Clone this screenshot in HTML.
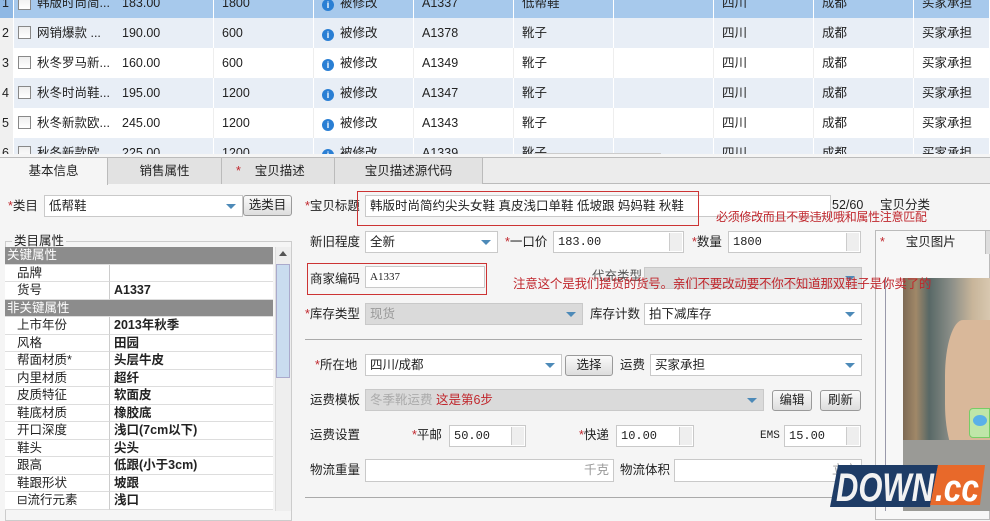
<!DOCTYPE html>
<html><head><meta charset="utf-8"><style>
*{box-sizing:border-box;margin:0;padding:0}
body{width:990px;height:511px;overflow:hidden;background:#f5f5f5;font-family:"Liberation Sans","Noto Sans CJK SC",sans-serif;font-size:12.5px;line-height:16px;color:#222;position:relative}
.a{position:absolute;white-space:nowrap}
.row{position:absolute;left:0;width:990px;height:30px}
.row div{position:absolute;top:0;height:30px;line-height:30px;border-right:1px solid #fff;padding-left:8px}
.cb{position:absolute;left:18px;top:8px;width:13px;height:13px;border:1px solid #888;background:linear-gradient(#eee,#fff)}
.info{display:inline-block;width:12px;height:12px;border-radius:50%;background:#2a7fd4;color:#fff;font-size:9px;line-height:12px;text-align:center;font-weight:bold;vertical-align:-1px;margin-right:6px}
.inp{position:absolute;background:#fff;border:1px solid #c9c9c9;height:22px;line-height:20px;padding-left:4px}
.gray{background:#dadada}
.dd::after{content:"";position:absolute;right:6px;top:8px;border:5px solid transparent;border-top:5px solid #4d8ab8;border-bottom:0}
.btn{position:absolute;border:1px solid #9a9a9a;border-radius:3px;background:linear-gradient(#fafafa,#ddd);height:21px;line-height:19px;text-align:center}
.red{color:#c0272d}
.star{color:#c0272d}
.sp{position:absolute;right:1px;top:1px;width:13px;height:18px;border-left:1px solid #ccc;background:#eee}
.mono{font-family:"Liberation Mono",monospace;font-size:12px}
.pt{position:absolute;left:5px;width:268px}
.pt div{position:absolute;height:17.5px;line-height:17px;border-bottom:1px solid #ddd}
.k{left:0;width:105px;padding-left:12px;background:#fff;border-right:1px solid #ccc}
.v{left:105px;width:163px;padding-left:4px;background:#fff;font-weight:bold}
.h{left:0;width:268px;background:#8c8c8c;color:#fff;padding-left:2px}
</style></head><body>
<!-- grid -->
<div class="a" style="left:0;top:0;width:990px;height:154px;background:#fff;overflow:hidden">
<div class="row" style="top:-12px;background:#a7c9ec"><div style="left:0;width:14px;padding-left:2px;background:#8fb8e4">1</div><span class="cb" style="top:9px"></span><div style="left:29px;width:85px;border:0">韩版时尚简...</div><div style="left:114px;width:100px">183.00</div><div style="left:214px;width:100px">1800</div><div style="left:314px;width:100px"><span class="info">i</span>被修改</div><div style="left:414px;width:100px">A1337</div><div style="left:514px;width:100px">低帮鞋</div><div style="left:614px;width:100px"></div><div style="left:714px;width:100px">四川</div><div style="left:814px;width:100px">成都</div><div style="left:914px;width:76px">买家承担</div></div>
<div class="row" style="top:18px;background:#e8eef6"><div style="left:0;width:14px;padding-left:2px;background:#f0f0f0">2</div><span class="cb"></span><div style="left:29px;width:85px;border:0">网销爆款 ...</div><div style="left:114px;width:100px">190.00</div><div style="left:214px;width:100px">600</div><div style="left:314px;width:100px"><span class="info">i</span>被修改</div><div style="left:414px;width:100px">A1378</div><div style="left:514px;width:100px">靴子</div><div style="left:614px;width:100px"></div><div style="left:714px;width:100px">四川</div><div style="left:814px;width:100px">成都</div><div style="left:914px;width:76px">买家承担</div></div>
<div class="row" style="top:48px;background:#fff"><div style="left:0;width:14px;padding-left:2px;background:#f0f0f0">3</div><span class="cb"></span><div style="left:29px;width:85px;border:0">秋冬罗马新...</div><div style="left:114px;width:100px;border-color:#eee">160.00</div><div style="left:214px;width:100px;border-color:#eee">600</div><div style="left:314px;width:100px;border-color:#eee"><span class="info">i</span>被修改</div><div style="left:414px;width:100px;border-color:#eee">A1349</div><div style="left:514px;width:100px;border-color:#eee">靴子</div><div style="left:614px;width:100px;border-color:#eee"></div><div style="left:714px;width:100px;border-color:#eee">四川</div><div style="left:814px;width:100px;border-color:#eee">成都</div><div style="left:914px;width:76px">买家承担</div></div>
<div class="row" style="top:78px;background:#e8eef6"><div style="left:0;width:14px;padding-left:2px;background:#f0f0f0">4</div><span class="cb"></span><div style="left:29px;width:85px;border:0">秋冬时尚鞋...</div><div style="left:114px;width:100px">195.00</div><div style="left:214px;width:100px">1200</div><div style="left:314px;width:100px"><span class="info">i</span>被修改</div><div style="left:414px;width:100px">A1347</div><div style="left:514px;width:100px">靴子</div><div style="left:614px;width:100px"></div><div style="left:714px;width:100px">四川</div><div style="left:814px;width:100px">成都</div><div style="left:914px;width:76px">买家承担</div></div>
<div class="row" style="top:108px;background:#fff"><div style="left:0;width:14px;padding-left:2px;background:#f0f0f0">5</div><span class="cb"></span><div style="left:29px;width:85px;border:0">秋冬新款欧...</div><div style="left:114px;width:100px;border-color:#eee">245.00</div><div style="left:214px;width:100px;border-color:#eee">1200</div><div style="left:314px;width:100px;border-color:#eee"><span class="info">i</span>被修改</div><div style="left:414px;width:100px;border-color:#eee">A1343</div><div style="left:514px;width:100px;border-color:#eee">靴子</div><div style="left:614px;width:100px;border-color:#eee"></div><div style="left:714px;width:100px;border-color:#eee">四川</div><div style="left:814px;width:100px;border-color:#eee">成都</div><div style="left:914px;width:76px">买家承担</div></div>
<div class="row" style="top:138px;background:#e8eef6"><div style="left:0;width:14px;padding-left:2px;background:#f0f0f0">6</div><span class="cb"></span><div style="left:29px;width:85px;border:0">秋冬新款欧</div><div style="left:114px;width:100px">225.00</div><div style="left:214px;width:100px">1200</div><div style="left:314px;width:100px"><span class="info">i</span>被修改</div><div style="left:414px;width:100px">A1339</div><div style="left:514px;width:100px">靴子</div><div style="left:614px;width:100px"></div><div style="left:714px;width:100px">四川</div><div style="left:814px;width:100px">成都</div><div style="left:914px;width:76px">买家承担</div></div>
<div class="a" style="left:534px;top:153px;width:127px;height:4px;background:#ccc"></div>
</div>
<div class="a" style="left:0;top:157px;width:990px;height:1px;background:#bbb"></div>
<!-- tabs -->
<div class="a" style="left:0;top:158px;width:990px;height:26px;background:#ececec;border-bottom:1px solid #bbb"></div>
<div class="a" style="left:0;top:158px;width:108px;height:27px;background:#f5f5f5;border-right:1px solid #bbb;text-align:center;line-height:26px">基本信息</div>
<div class="a" style="left:108px;top:158px;width:114px;height:26px;background:#e2e2e2;border-right:1px solid #bbb;text-align:center;line-height:26px">销售属性</div>
<div class="a" style="left:222px;top:158px;width:113px;height:26px;background:#e2e2e2;border-right:1px solid #bbb;line-height:26px;padding-left:14px"><span class="star">*</span>&nbsp;&nbsp;&nbsp;&nbsp;宝贝描述</div>
<div class="a" style="left:335px;top:158px;width:148px;height:26px;background:#e2e2e2;border-right:1px solid #bbb;text-align:center;line-height:26px">宝贝描述源代码</div>
<!-- left -->
<div class="a" style="left:8px;top:198px"><span class="star">*</span>类目</div>
<div class="inp dd" style="left:44px;top:195px;width:199px">低帮鞋</div>
<div class="btn" style="left:243px;top:195px;width:49px">选类目</div>
<div class="a" style="left:5px;top:241px;width:287px;height:280px;border:1px solid #ccc"></div>
<div class="a" style="left:12px;top:233px;background:#f5f5f5;padding:0 2px">类目属性</div>
<div class="pt" style="top:247px">
<div class="h" style="top:0">关键属性</div>
<div class="k" style="top:17.5px">品牌</div><div class="v" style="top:17.5px"></div>
<div class="k" style="top:35px">货号</div><div class="v" style="top:35px">A1337</div>
<div class="h" style="top:52.5px">非关键属性</div>
<div class="k" style="top:70px">上市年份</div><div class="v" style="top:70px">2013年秋季</div>
<div class="k" style="top:87.5px">风格</div><div class="v" style="top:87.5px">田园</div>
<div class="k" style="top:105px">帮面材质*</div><div class="v" style="top:105px">头层牛皮</div>
<div class="k" style="top:122.5px">内里材质</div><div class="v" style="top:122.5px">超纤</div>
<div class="k" style="top:140px">皮质特征</div><div class="v" style="top:140px">软面皮</div>
<div class="k" style="top:157.5px">鞋底材质</div><div class="v" style="top:157.5px">橡胶底</div>
<div class="k" style="top:175px">开口深度</div><div class="v" style="top:175px">浅口(7cm以下)</div>
<div class="k" style="top:192.5px">鞋头</div><div class="v" style="top:192.5px">尖头</div>
<div class="k" style="top:210px">跟高</div><div class="v" style="top:210px">低跟(小于3cm)</div>
<div class="k" style="top:227.5px">鞋跟形状</div><div class="v" style="top:227.5px">坡跟</div>
<div class="k" style="top:245px">⊟流行元素</div><div class="v" style="top:245px">浅口</div>
</div>
<div class="a" style="left:275px;top:247px;width:16px;height:264px;background:#eee;border-left:1px solid #ddd"></div>
<div class="a" style="left:276px;top:264px;width:14px;height:114px;background:#c9dcef;border:1px solid #aac"></div>
<div class="a" style="left:279px;top:251px;border:4px solid transparent;border-bottom:5px solid #555;border-top:0"></div>
<!-- right panel -->
<div class="a" style="left:875px;top:230px;width:115px;height:290px;border:1px solid #bbb;background:#f7f7f7"></div>
<div class="a" style="left:876px;top:231px;width:110px;height:23px;line-height:22px;padding-left:4px"><span class="star">*</span>&nbsp;&nbsp;&nbsp;&nbsp;&nbsp;&nbsp;宝贝图片</div>
<div class="a" style="left:985px;top:231px;width:5px;height:23px;background:#ddd;border-left:1px solid #bbb"></div>
<div class="a" style="left:885px;top:277px;width:1px;height:234px;background:#99a"></div>
<div class="a" style="left:903px;top:278px;width:87px;height:233px;background:linear-gradient(90deg,#7d6a55 0%,#a08868 15%,#586866 30%,#8a8e88 55%,#c8b59a 80%,#d8c8b0 100%)"></div>
<div class="a" style="left:945px;top:320px;width:45px;height:140px;background:#d9b89a;border-radius:40% 0 0 40%"></div>
<div class="a" style="left:903px;top:440px;width:87px;height:71px;background:#9a9a96"></div>
<div class="a" style="left:969px;top:408px;width:21px;height:30px;background:#bfe6a8;border:1px solid #7c6;border-radius:4px 0 0 4px"></div>
<div class="a" style="left:973px;top:415px;width:14px;height:11px;background:#5ab0e8;border-radius:50%"></div>
<!-- middle form -->
<div class="a" style="left:305px;top:198px"><span class="star">*</span>宝贝标题</div>
<div class="inp" style="left:365px;top:195px;width:466px">韩版时尚简约尖头女鞋 真皮浅口单鞋 低坡跟 妈妈鞋 秋鞋</div>
<div class="a" style="left:357px;top:191px;width:342px;height:35px;border:1px solid #c33"></div>
<div class="a" style="left:832px;top:197px">52/60</div>
<div class="a" style="left:880px;top:197px">宝贝分类</div>
<div class="a red" style="left:716px;top:209px;font-size:12px;letter-spacing:-0.3px">必须修改而且不要违规哦和属性注意匹配</div>
<div class="a" style="left:310px;top:234px">新旧程度</div>
<div class="inp dd" style="left:365px;top:231px;width:133px">全新</div>
<div class="a" style="left:505px;top:234px"><span class="star">*</span>一口价</div>
<div class="inp mono" style="left:553px;top:231px;width:131px">183.00<span class="sp"></span></div>
<div class="a" style="left:692px;top:234px"><span class="star">*</span>数量</div>
<div class="inp mono" style="left:728px;top:231px;width:133px">1800<span class="sp"></span></div>
<div class="inp" style="left:365px;top:266px;width:120px;font-family:'Liberation Serif',serif;font-size:11px">A1337</div>
<div class="a" style="left:310px;top:271px">商家编码</div>
<div class="a" style="left:307px;top:263px;width:180px;height:32px;border:1px solid #c33"></div>
<div class="a" style="left:592px;top:268px;color:#555">代充类型</div>
<div class="inp gray dd" style="left:644px;top:267px;width:218px"></div>
<div class="a red" style="left:513px;top:276px;letter-spacing:-0.2px">注意这个是我们提货的货号。亲们不要改动要不你不知道那双鞋子是你卖了的</div>
<div class="a" style="left:305px;top:306px"><span class="star">*</span>库存类型</div>
<div class="inp gray dd" style="left:365px;top:303px;width:218px;color:#999">现货</div>
<div class="a" style="left:590px;top:306px">库存计数</div>
<div class="inp dd" style="left:644px;top:303px;width:218px">拍下减库存</div>
<div class="a" style="left:305px;top:339px;width:557px;height:1px;background:#aaa"></div>
<div class="a" style="left:315px;top:357px"><span class="star">*</span>所在地</div>
<div class="inp dd" style="left:365px;top:354px;width:197px">四川/成都</div>
<div class="btn" style="left:565px;top:355px;width:48px">选择</div>
<div class="a" style="left:620px;top:357px">运费</div>
<div class="inp dd" style="left:650px;top:354px;width:212px">买家承担</div>
<div class="a" style="left:310px;top:392px">运费模板</div>
<div class="inp gray dd" style="left:365px;top:389px;width:399px;color:#aaa">冬季靴运费 <span class="red">这是第6步</span></div>
<div class="btn" style="left:772px;top:390px;width:40px">编辑</div>
<div class="btn" style="left:820px;top:390px;width:41px">刷新</div>
<div class="a" style="left:310px;top:427px">运费设置</div>
<div class="a" style="left:412px;top:427px"><span class="star">*</span>平邮</div>
<div class="inp mono" style="left:449px;top:425px;width:77px">50.00<span class="sp"></span></div>
<div class="a" style="left:579px;top:427px"><span class="star">*</span>快递</div>
<div class="inp mono" style="left:616px;top:425px;width:78px">10.00<span class="sp"></span></div>
<div class="a mono" style="left:760px;top:428px;font-size:11px">EMS</div>
<div class="inp mono" style="left:784px;top:425px;width:77px">15.00<span class="sp"></span></div>
<div class="a" style="left:310px;top:462px">物流重量</div>
<div class="inp" style="left:365px;top:459px;width:249px;height:23px;text-align:right;padding-right:4px;color:#999">千克</div>
<div class="a" style="left:620px;top:462px">物流体积</div>
<div class="inp" style="left:674px;top:459px;width:188px;height:23px;text-align:right;padding-right:4px;color:#999">立方</div>
<div class="a" style="left:305px;top:497px;width:557px;height:1px;background:#aaa"></div>
<!-- logo -->
<svg class="a" style="left:830px;top:465px" width="155" height="42"><polygon points="8,0 108,0 100,42 0,42" fill="#1e3c66"/><polygon points="108,0 155,0 150,40 100,40" fill="#e8692a"/><text x="6" y="36" font-family="Liberation Sans" font-weight="bold" font-style="italic" font-size="40" fill="#f2f2f2" textLength="98" lengthAdjust="spacingAndGlyphs">DOWN</text><text x="105" y="36" font-family="Liberation Sans" font-weight="bold" font-style="italic" font-size="38" fill="#fff" textLength="44" lengthAdjust="spacingAndGlyphs">.cc</text></svg>
</body></html>
